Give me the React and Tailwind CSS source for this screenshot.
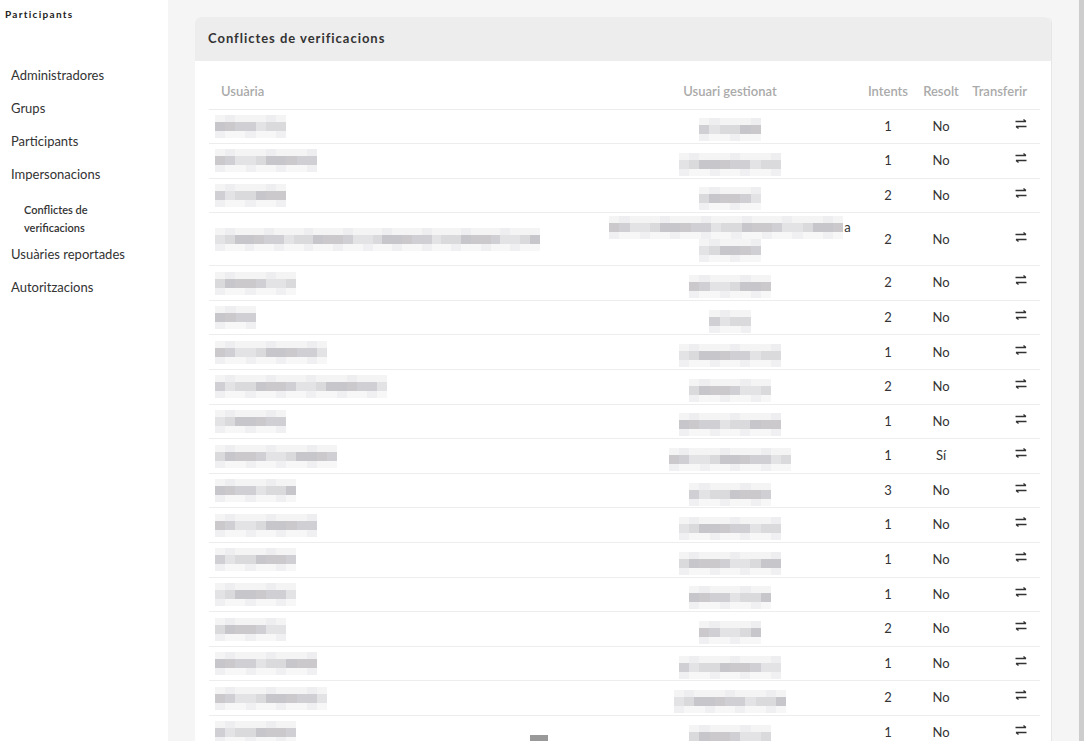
import React from 'react'

const navItems = [
  { label: 'Administradores' },
  { label: 'Grups' },
  { label: 'Participants' },
  { label: 'Impersonacions' },
  { label: 'Conflictes de verificacions', sub: true },
  { label: 'Usuàries reportades' },
  { label: 'Autoritzacions' },
]

// [intents, resolt, user block width, managed block width, tall]
const rows = [
  [1, 'No', 71, 62],
  [1, 'No', 102, 102],
  [2, 'No', 71, 62],
  [2, 'No', 325, 62, true],
  [2, 'No', 81, 82],
  [2, 'No', 41, 42],
  [1, 'No', 112, 102],
  [2, 'No', 172, 82],
  [1, 'No', 71, 102],
  [1, 'Sí', 122, 122],
  [3, 'No', 81, 82],
  [1, 'No', 102, 102],
  [1, 'No', 81, 102],
  [1, 'No', 81, 82],
  [2, 'No', 71, 62],
  [1, 'No', 102, 102],
  [2, 'No', 112, 112],
  [1, 'No', 81, 82],
]

const shades = ['bg-[#c6c6cb]', 'bg-[#d0d0d4]', 'bg-[#dadadd]', 'bg-[#cbc9cc]', 'bg-[#e3e3e6]']

function Blur({ width, seed = 1 }) {
  const count = Math.max(1, Math.round(width / 10))
  const blocks = []
  for (let i = 0; i < count; i++) {
    blocks.push(shades[(i * 7 + seed * 3 + (i % 3)) % shades.length])
  }
  return (
    <div className="inline-flex flex-col bg-[#f6f6f7]" style={{ width }}>
      <div className="h-[7px] flex">
        {blocks.map((c, i) => (
          <div key={i} className={`flex-1 ${i % 4 === 1 ? 'bg-[#eeeef0]' : 'bg-[#f4f4f5]'}`} />
        ))}
      </div>
      <div className="h-[9px] flex">
        {blocks.map((c, i) => (
          <div key={i} className={`flex-1 ${c}`} />
        ))}
      </div>
      <div className="h-[7px] flex">
        {blocks.map((c, i) => (
          <div key={i} className={`flex-1 ${i % 3 === 0 ? 'bg-[#f0f0f2]' : 'bg-[#f7f7f8]'}`} />
        ))}
      </div>
    </div>
  )
}

function TransferIcon() {
  return (
    <svg width="12" height="10" viewBox="0 0 12 10" fill="none" stroke="#333" strokeWidth="1.3">
      <path d="M0.5 2.5h10.5M8.5 0.5l2.5 2" />
      <path d="M11.5 7.5H1M3.5 9.5L1 7.5" />
    </svg>
  )
}

export default function App() {
  return (
    <div className="flex h-[741px] overflow-hidden bg-[#f5f5f5] text-[#333]" style={{ fontFamily: '"Source Sans Pro", Lato, "Noto Sans", sans-serif' }}>
      <aside className="w-[168px] shrink-0 bg-white">
        <div className="px-[5px] pt-[7px] text-[10px] font-bold tracking-[0.13em] text-[#222]">Participants</div>
        <nav className="mt-[37px] flex flex-col">
          {navItems.map((item) =>
            item.sub ? (
              <div key={item.label} className="pl-[24px] pr-4 pt-[10px] pb-[1px] text-[11px] font-semibold leading-[18px] text-[#333]">
                Conflictes de<br />verificacions
              </div>
            ) : (
              <div key={item.label} className="px-[11px] h-[33px] flex items-center text-[13px] text-[#333]">
                {item.label}
              </div>
            )
          )}
        </nav>
      </aside>

      <main className="flex-1 pl-[27px] pr-[27px] pt-[17px]">
        <div className="w-[857px] bg-white rounded-t-[6px] border-r border-[#e6e6e6]">
          <div className="h-[44px] bg-[#ededed] rounded-t-[6px] px-[13px] flex items-center text-[13px] font-bold tracking-[0.075em] text-[#333]">
            Conflictes de verificacions
          </div>
          <div className="px-[14px] pt-[21px]">
            <table className="w-[831px] table-fixed border-collapse text-[13px]">
              <colgroup>
                <col className="w-[396px]" />
                <col className="w-[250px]" />
                <col className="w-[56px]" />
                <col className="w-[50px]" />
                <col className="w-[79px]" />
              </colgroup>
              <thead>
                <tr className="h-[27px] text-[#aaa] font-semibold border-b border-[#ececec]">
                  <th className="text-left pl-[12px] font-semibold align-top">Usuària</th>
                  <th className="text-center font-semibold align-top">Usuari gestionat</th>
                  <th className="text-center font-semibold align-top pl-[10px]">Intents</th>
                  <th className="text-center font-semibold align-top pl-[10px]">Resolt</th>
                  <th className="text-right pr-[13px] font-semibold align-top">Transferir</th>
                </tr>
              </thead>
              <tbody>
                {rows.map(([n, r, uw, gw, tall], i) => (
                  <tr key={i} className={`${tall ? 'h-[53px]' : 'h-[34.6px]'} border-b border-[#ededed]`}>
                    <td className="pl-[6px] align-middle">
                      <div className="flex items-center gap-[120px]">
                        <Blur width={uw} seed={i} />
                        {i === 17 && <div className="w-[18px] h-[10px] bg-[#999] mt-[14px] ml-[114px]" />}
                      </div>
                    </td>
                    <td className="text-center align-middle">
                      {tall ? (
                        <div className="flex flex-col items-center">
                          <div className="flex items-center">
                            <Blur width={234} seed={i + 3} />
                            <span className="text-[13px] ml-px">a</span>
                          </div>
                          <Blur width={gw} seed={i + 5} />
                        </div>
                      ) : (
                        <Blur width={gw} seed={i + 2} />
                      )}
                    </td>
                    <td className="text-center align-middle pl-[10px]">{n}</td>
                    <td className="text-center align-middle pl-[10px]">{r}</td>
                    <td className="text-right align-middle pr-[13px]">
                      <div className="inline-flex -translate-y-[2px]"><TransferIcon /></div>
                    </td>
                  </tr>
                ))}
              </tbody>
            </table>
          </div>
        </div>
      </main>
      <div className="w-[5px] shrink-0 bg-[#cdcdcd]" />
    </div>
  )
}
